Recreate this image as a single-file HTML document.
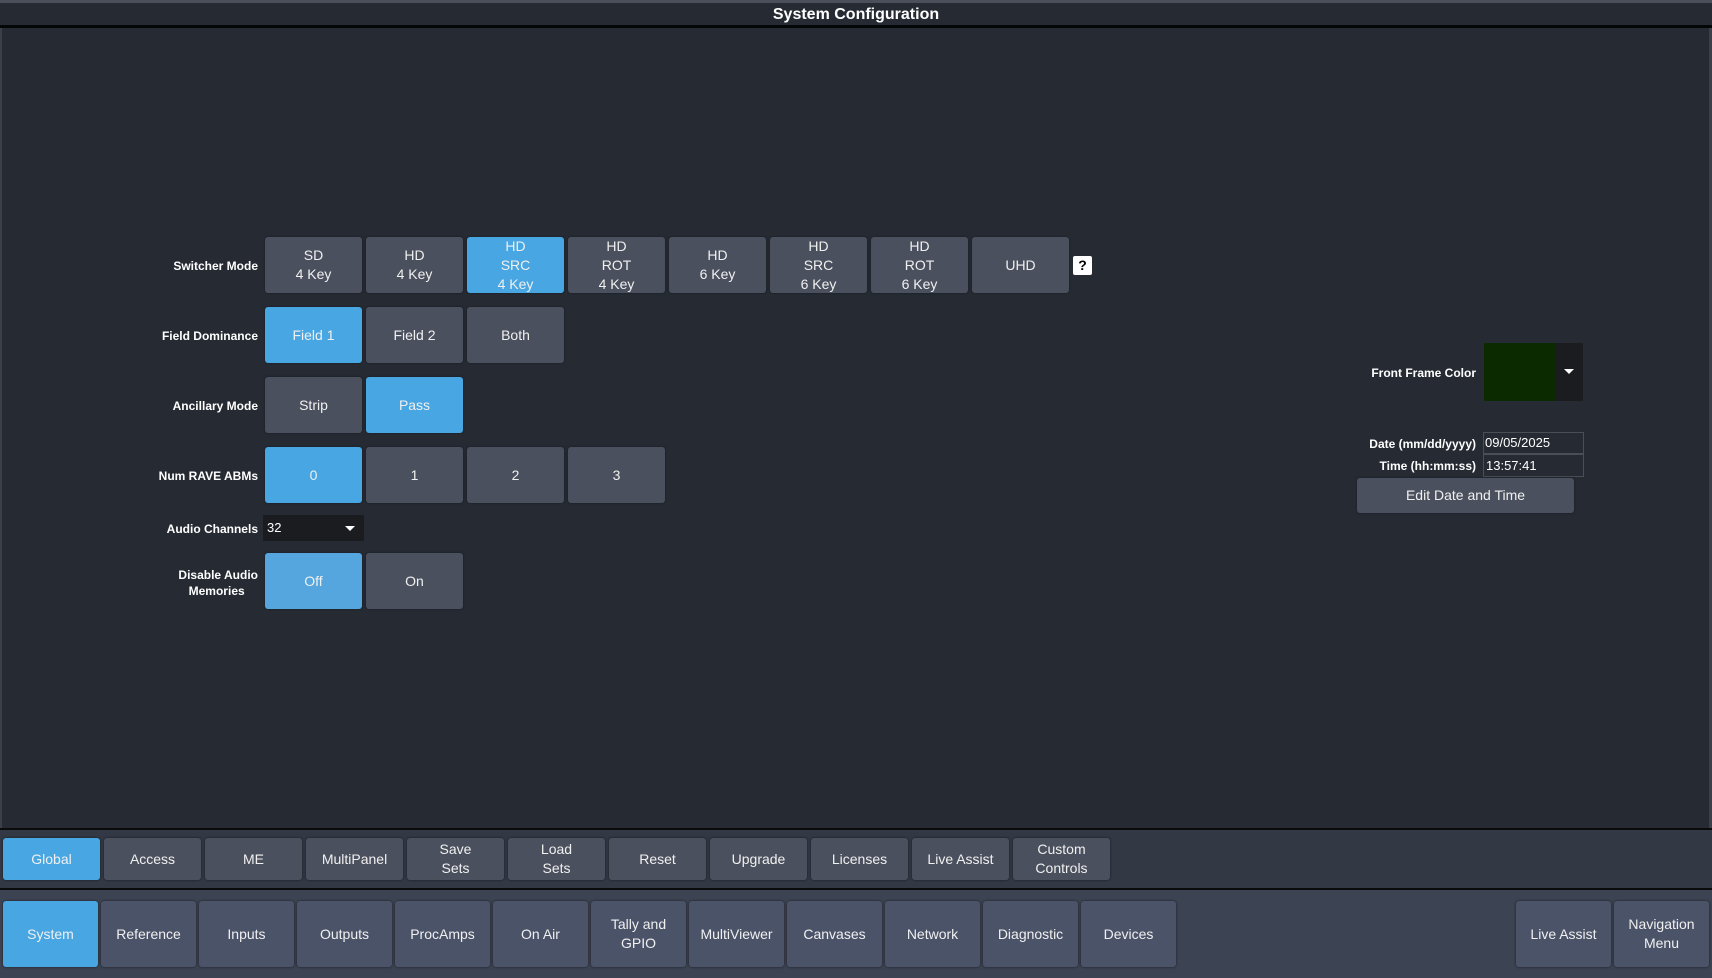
<!DOCTYPE html>
<html><head><meta charset="utf-8"><style>
*{box-sizing:border-box;margin:0;padding:0}
body{width:1712px;height:978px;background:#262a33;font-family:"Liberation Sans",sans-serif;color:#fff;position:relative;overflow:hidden}
.a{position:absolute}
.b{position:absolute;background:#4a505d;border-radius:3px;display:flex;align-items:center;justify-content:center;text-align:center;font-size:14px;line-height:19px;color:#f0f0f0;box-shadow:0 0 2px #181b20}
.on{background:#48a6e2}
.l{position:absolute;font-size:12px;font-weight:bold;text-align:right;width:240px}
.n{background:#4b5368}
</style></head><body>
<div class="a" style="left:0;top:0;width:1712px;height:3px;background:#4a4f5a"></div>
<div class="a" style="left:0;top:3px;width:1712px;height:23px;background:#262a32;text-align:center;font-weight:bold;font-size:16px;line-height:23px">System Configuration</div>
<div class="a" style="left:0;top:25px;width:1712px;height:3px;background:#050608"></div>
<div class="a" style="left:0;top:28px;width:2px;height:800px;background:#3a3f48"></div>
<div class="a" style="left:1709px;top:28px;width:3px;height:800px;background:#3a3f48"></div>

<div class="l" style="left:18px;top:259px">Switcher Mode</div>
<div class="b" style="left:265px;top:237px;width:97px;height:56px">SD<br>4 Key</div>
<div class="b" style="left:366px;top:237px;width:97px;height:56px">HD<br>4 Key</div>
<div class="b on" style="left:467px;top:237px;width:97px;height:56px">HD<br>SRC<br>4 Key</div>
<div class="b" style="left:568px;top:237px;width:97px;height:56px">HD<br>ROT<br>4 Key</div>
<div class="b" style="left:669px;top:237px;width:97px;height:56px">HD<br>6 Key</div>
<div class="b" style="left:770px;top:237px;width:97px;height:56px">HD<br>SRC<br>6 Key</div>
<div class="b" style="left:871px;top:237px;width:97px;height:56px">HD<br>ROT<br>6 Key</div>
<div class="b" style="left:972px;top:237px;width:97px;height:56px">UHD</div>
<div class="a" style="left:1073px;top:256px;width:19px;height:19px;background:#fff;color:#000;font-weight:bold;font-size:14px;text-align:center;line-height:19px;border-radius:2px">?</div>

<div class="l" style="left:18px;top:329px">Field Dominance</div>
<div class="b on" style="left:265px;top:307px;width:97px;height:56px">Field 1</div>
<div class="b" style="left:366px;top:307px;width:97px;height:56px">Field 2</div>
<div class="b" style="left:467px;top:307px;width:97px;height:56px">Both</div>

<div class="l" style="left:18px;top:399px">Ancillary Mode</div>
<div class="b" style="left:265px;top:377px;width:97px;height:56px">Strip</div>
<div class="b on" style="left:366px;top:377px;width:97px;height:56px">Pass</div>

<div class="l" style="left:18px;top:469px">Num RAVE ABMs</div>
<div class="b on" style="left:265px;top:447px;width:97px;height:56px">0</div>
<div class="b" style="left:366px;top:447px;width:97px;height:56px">1</div>
<div class="b" style="left:467px;top:447px;width:97px;height:56px">2</div>
<div class="b" style="left:568px;top:447px;width:97px;height:56px">3</div>

<div class="l" style="left:18px;top:522px">Audio Channels</div>
<div class="a" style="left:263px;top:515px;width:101px;height:26px;background:#1a1c20;font-size:13px;line-height:26px;padding-left:4px">32<span style="position:absolute;right:9px;top:11px;border-left:5px solid transparent;border-right:5px solid transparent;border-top:5px solid #fff"></span></div>

<div class="l" style="left:18px;top:567px;line-height:16px">Disable Audio<br>Memories&nbsp;&nbsp;&nbsp;&nbsp;</div>
<div class="b on" style="left:265px;top:553px;width:97px;height:56px;background:#55a6df">Off</div>
<div class="b" style="left:366px;top:553px;width:97px;height:56px">On</div>

<div class="l" style="left:1236px;top:366px">Front Frame Color</div>
<div class="a" style="left:1484px;top:343px;width:71px;height:58px;background:#0c2a00"></div>
<div class="a" style="left:1555px;top:343px;width:28px;height:58px;background:#1b1c1f"><span style="position:absolute;left:9px;top:26px;border-left:5px solid transparent;border-right:5px solid transparent;border-top:5px solid #fff"></span></div>
<div class="l" style="left:1236px;top:437px">Date (mm/dd/yyyy)</div>
<div class="a" style="left:1483px;top:432px;width:101px;height:22px;border:1px solid #4a4e55;font-size:13px;line-height:20px;padding-left:1px">09/05/2025</div>
<div class="l" style="left:1236px;top:459px">Time (hh:mm:ss)</div>
<div class="a" style="left:1483px;top:454px;width:101px;height:23px;border:1px solid #4a4e55;font-size:13px;line-height:21px;padding-left:2px">13:57:41</div>
<div class="b" style="left:1357px;top:478px;width:217px;height:35px">Edit Date and Time</div>

<div class="a" style="left:0;top:828px;width:1712px;height:2px;background:#0a0b0d"></div>
<div class="a" style="left:0;top:830px;width:1712px;height:58px;background:#323844"></div>
<div class="a" style="left:0;top:888px;width:1712px;height:2px;background:#0a0b0d"></div>
<div class="a" style="left:0;top:890px;width:1712px;height:88px;background:#3c4352"></div>

<div class="b on" style="left:3px;top:838px;width:97px;height:42px">Global</div>
<div class="b" style="left:104px;top:838px;width:97px;height:42px">Access</div>
<div class="b" style="left:205px;top:838px;width:97px;height:42px">ME</div>
<div class="b" style="left:306px;top:838px;width:97px;height:42px">MultiPanel</div>
<div class="b" style="left:407px;top:838px;width:97px;height:42px">Save<br>Sets</div>
<div class="b" style="left:508px;top:838px;width:97px;height:42px">Load<br>Sets</div>
<div class="b" style="left:609px;top:838px;width:97px;height:42px">Reset</div>
<div class="b" style="left:710px;top:838px;width:97px;height:42px">Upgrade</div>
<div class="b" style="left:811px;top:838px;width:97px;height:42px">Licenses</div>
<div class="b" style="left:912px;top:838px;width:97px;height:42px">Live Assist</div>
<div class="b" style="left:1013px;top:838px;width:97px;height:42px">Custom<br>Controls</div>

<div class="b on" style="left:3px;top:901px;width:95px;height:66px">System</div>
<div class="b n" style="left:101px;top:901px;width:95px;height:66px">Reference</div>
<div class="b n" style="left:199px;top:901px;width:95px;height:66px">Inputs</div>
<div class="b n" style="left:297px;top:901px;width:95px;height:66px">Outputs</div>
<div class="b n" style="left:395px;top:901px;width:95px;height:66px">ProcAmps</div>
<div class="b n" style="left:493px;top:901px;width:95px;height:66px">On Air</div>
<div class="b n" style="left:591px;top:901px;width:95px;height:66px">Tally and<br>GPIO</div>
<div class="b n" style="left:689px;top:901px;width:95px;height:66px">MultiViewer</div>
<div class="b n" style="left:787px;top:901px;width:95px;height:66px">Canvases</div>
<div class="b n" style="left:885px;top:901px;width:95px;height:66px">Network</div>
<div class="b n" style="left:983px;top:901px;width:95px;height:66px">Diagnostic</div>
<div class="b n" style="left:1081px;top:901px;width:95px;height:66px">Devices</div>
<div class="b n" style="left:1516px;top:901px;width:95px;height:66px">Live Assist</div>
<div class="b n" style="left:1614px;top:901px;width:95px;height:66px">Navigation<br>Menu</div>
</body></html>
